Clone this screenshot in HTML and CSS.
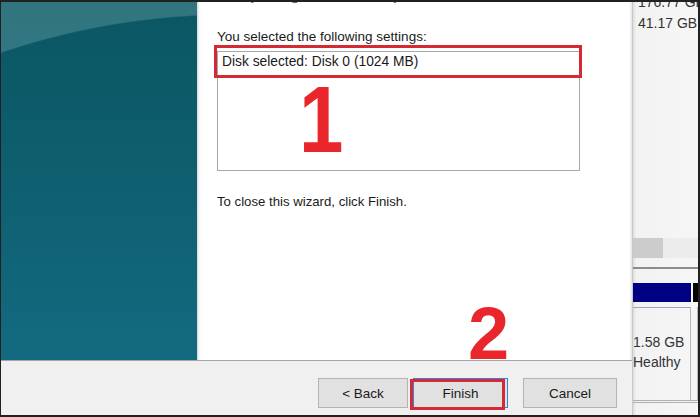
FILE: index.html
```html
<!DOCTYPE html>
<html lang="en">
<head>
<meta charset="utf-8">
<title>New Simple Volume Wizard</title>
<link rel="stylesheet" href="styles.css">
</head>
<body>
<div class="screen">
  <div class="dialog">
    <div class="main">
      <div class="side"></div>
      <div class="content">
        <div class="title">Completing the New Simple Volume Wizard</div>
        <p class="label">You selected the following settings:</p>
        <div class="listbox">
          <div class="item">Disk selected: Disk 0 (1024 MB)</div>
        </div>
        <p class="close-text">To close this wizard, click Finish.</p>
      </div>
    </div>
    <div class="footer">
      <button class="btn btn-back">&lt; Back</button>
      <button class="btn btn-finish">Finish</button>
      <button class="btn btn-cancel">Cancel</button>
    </div>
  </div>
  <div class="behind">
    <div class="sizes">
      <div>176.77 GB</div>
      <div>41.17 GB</div>
    </div>
    <div class="scroll"><div class="thumb"></div></div>
    <div class="rule"></div>
    <div class="disk-bar"><div class="blue"></div><div class="black"></div></div>
    <div class="vol">
      <div class="vol-cell">
        <div>1.58 GB</div>
        <div>Healthy</div>
      </div>
      <div class="vol-rest"></div>
    </div>
  </div>

  <div class="mark mark-box1"></div>
  <div class="mark mark-num1">1</div>
  <div class="mark mark-num2">2</div>
  <div class="mark mark-box2"></div>
</div>
</body>
</html>
```

FILE: styles.css
```css
* { box-sizing: border-box; }

html, body {
  margin: 0;
  padding: 0;
  background: #1e1e1e;
}

.screen {
  position: relative;
  width: 700px;
  height: 417px;
  border-style: solid;
  border-color: #202020;
  border-width: 2px 2px 2px 1px;
  display: flex;
  overflow: hidden;
  font-family: "Liberation Sans", Arial, sans-serif;
  color: #1a1a1a;
}

.dialog {
  flex: none;
  width: 631px;
  display: flex;
  flex-direction: column;
  background: #f0f0f0;
}

.main {
  height: 358px;
  display: flex;
}

.side {
  width: 196px;
  flex: none;
  background:
    radial-gradient(circle 715px at 230px 727px, rgba(0,0,0,0) 99.8%, rgba(110,168,172,0.38) 100%),
    linear-gradient(180deg, #0b5663 0%, #0e5e6e 45%, #136a80 100%);
}

.content {
  flex: 1;
  overflow: hidden;
  padding-left: 20px;
  background: linear-gradient(90deg, #d6d6d6 0px, #f6f6f6 2px, #ffffff 4px, #ffffff calc(100% - 3px), #e4e4e4 100%);
}

.title {
  margin-top: -15px;
  font-size: 15px;
  line-height: 16px;
  font-weight: bold;
  color: #666;
  white-space: nowrap;
}

.label {
  margin: 26px 0 0;
  font-size: 13.5px;
  line-height: 16px;
}

.listbox {
  margin-top: 6px;
  width: 363px;
  height: 120px;
  border: 1px solid #a8a8a8;
  background: #fff;
  padding: 2px 4px;
}

.item {
  font-size: 13.8px;
  line-height: 16px;
}

.close-text {
  margin: 23px 0 0;
  font-size: 13.2px;
  line-height: 16px;
}

.footer {
  flex: 1;
  border-top: 1px solid #a6a6a6;
  display: flex;
  justify-content: flex-end;
  align-items: flex-start;
  padding: 17px 15px 0 0;
  gap: 5px;
}

.btn {
  height: 30px;
  font-family: "Liberation Sans", Arial, sans-serif;
  font-size: 13.5px;
  color: #1a1a1a;
  background: #e1e1e1;
  border: 1px solid #b4b4b4;
  padding: 0;
}

.btn-back { width: 90px; }
.btn-finish { width: 95px; border-color: #2e86d9; }
.btn-cancel { width: 94px; margin-left: 10px; }

.behind {
  flex: 1;
  min-width: 0;
  background: linear-gradient(90deg, #dcdcdc 0px, #f2f2f2 3px, #f6f6f6 100%);
  border-left: 1px solid #c8c8c8;
  display: flex;
  flex-direction: column;
  font-size: 14px;
  color: #333;
  overflow: hidden;
}

.sizes {
  margin-top: -10px;
  padding-left: 5px;
  line-height: 21px;
  white-space: nowrap;
}

.scroll {
  margin-top: 204px;
  height: 20px;
  background: #ececec;
}

.thumb {
  width: 30px;
  height: 20px;
  background: #cccccc;
}

.rule {
  margin-top: 9px;
  height: 2px;
  background: #8c8c8c;
}

.disk-bar {
  margin-top: 14px;
  height: 19px;
  display: flex;
  gap: 2px;
}

.blue { width: 58px; flex: none; background: #000084; }
.black { flex: 1; background: #050505; }

.vol {
  margin-top: 5px;
  height: 96px;
  display: flex;
  border-bottom: 3px double #b0b0b0;
}

.vol-cell {
  width: 58px;
  flex: none;
  border-top: 1px solid #9aa3c0;
  border-right: 1px solid #b8b8b8;
  padding-top: 24px;
  line-height: 20px;
  white-space: nowrap;
}

.vol-rest {
  flex: 1;
  border-right: 1px solid #b8b8b8;
}

.mark { position: absolute; }

.mark-box1 {
  left: 213px;
  top: 43px;
  width: 368px;
  height: 33px;
  border: 3px solid #d42a33;
}

.mark-num1, .mark-num2 {
  font-family: "Liberation Sans", Arial, sans-serif;
  font-weight: bold;
  color: #e8262b;
  line-height: 1;
}

.mark-num1 {
  left: 298px;
  top: 71px;
  font-size: 94px;
  transform: scaleX(0.85);
  transform-origin: left top;
}

.mark-num2 {
  left: 467px;
  top: 295px;
  font-size: 74px;
}

.mark-box2 {
  left: 409px;
  top: 377px;
  width: 95px;
  height: 31px;
  border: 3px solid #d42a33;
}
```
